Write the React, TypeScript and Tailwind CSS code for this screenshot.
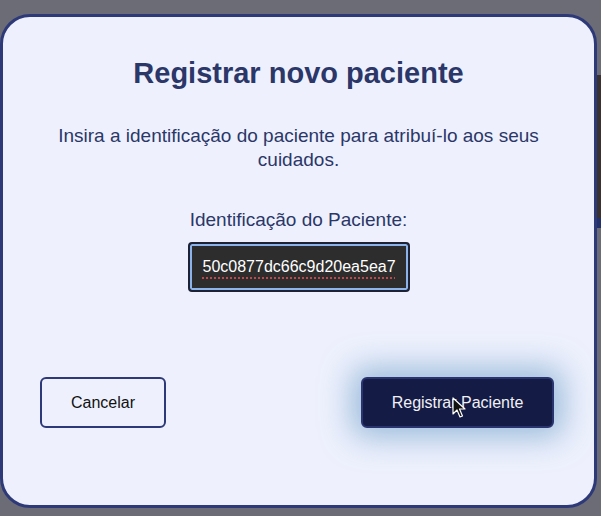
import React from "react";

export default function App() {
  return (
    <div className="relative h-[516px] w-[601px] overflow-hidden bg-[#6c6c76]" style={{ fontFamily: '"Liberation Sans", Arial, sans-serif' }}>
      {/* background scraps behind the modal */}
      <div className="absolute right-0 top-[75px] h-[153px] w-[10px] bg-[#3a3230]" />
      <div className="absolute right-0 top-[218px] h-[10px] w-[10px] bg-[#24306a]" />

      <div className="relative mt-[14px] flex h-[494px] w-[597px] flex-col items-center rounded-[30px] border-[3px] border-[#2e3a78] bg-[#eef1fd]">
        <h1 className="mt-[38px] text-[29px] font-bold leading-[36px] text-[#2b3768]">Registrar novo paciente</h1>

        <p className="mt-[33px] w-[500px] text-center text-[19px] leading-[24px] text-[#2b3768]">
          Insira a identificação do paciente para atribuí-lo aos seus cuidados.
        </p>

        <label className="mt-[36px] text-[19px] leading-[24px] text-[#2b3768]">Identificação do Paciente:</label>

        <div className="mt-[10px] flex h-[50px] w-[222px] items-center rounded-[4px] border-2 border-[#1d2235] bg-[#2d2d2d] px-[13px] ring-2 ring-inset ring-[#8db4ea]">
          <span className="text-[16px] text-white underline decoration-[#c04848] decoration-dotted decoration-[1.5px] underline-offset-[5px]">
            50c0877dc66c9d20ea5ea7
          </span>
        </div>

        <div className="mt-[85px] flex w-full justify-between pl-[37px] pr-[40px]">
          <button className="h-[51px] w-[126px] rounded-[6px] border-2 border-[#2e3a78] bg-[#eef1fd] text-[16px] text-[#111]">
            Cancelar
          </button>
          <button className="relative h-[51px] w-[193px] rounded-[6px] border-2 border-[#2a3570] bg-[#141b45] text-[16px] text-[#f0f0f5] shadow-[0_0_30px_10px_rgba(80,140,190,0.5)]">
            Registrar Paciente
            <svg className="absolute left-[89px] top-[18px]" width="14" height="22" viewBox="0 0 14 22">
              <path d="M1 1 L1 17 L5 13 L8 20 L10.5 19 L7.5 12 L13 12 Z" fill="#111" stroke="#fff" strokeWidth="1.2" strokeLinejoin="round" />
            </svg>
          </button>
        </div>
      </div>
    </div>
  );
}
